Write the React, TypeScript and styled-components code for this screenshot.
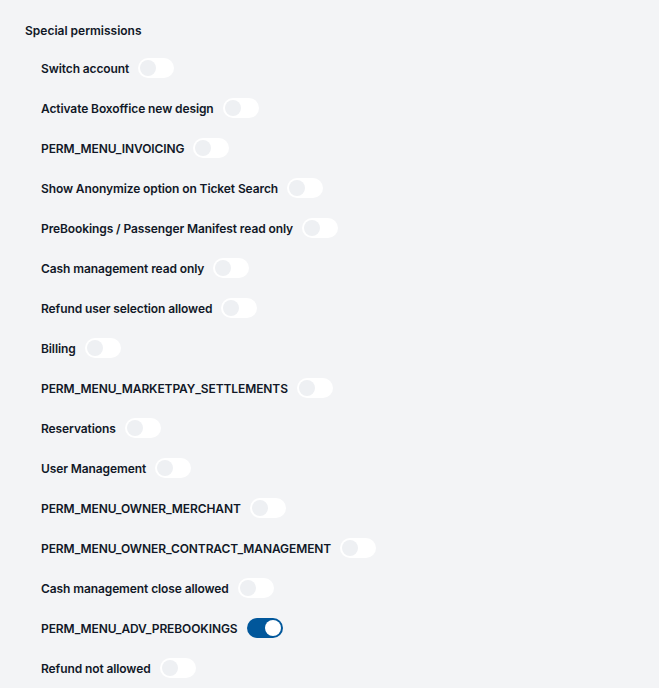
import React, { useState } from 'react';
import styled, { createGlobalStyle } from 'styled-components';

const GlobalStyle = createGlobalStyle`
  html, body {
    margin: 0;
    padding: 0;
    background: #ffffff;
  }
  body {
    font-family: Inter, 'Liberation Sans', Arial, sans-serif;
    -webkit-font-smoothing: antialiased;
  }
`;

const Panel = styled.section`
  width: 659px;
  min-height: 720px;
  box-sizing: border-box;
  background: #f3f4f6;
  padding: 24px 0 0 25px;
`;

const Heading = styled.h3`
  margin: 0 0 20px;
  font-size: 12px;
  line-height: 14px;
  font-weight: 600;
  color: #111827;
`;

const List = styled.div`
  display: flex;
  flex-direction: column;
  gap: 20px;
  padding-left: 16px;
`;

const Row = styled.label`
  display: flex;
  align-items: center;
  gap: 9px;
  height: 20px;
  cursor: pointer;
`;

const Name = styled.span`
  font-size: 12px;
  font-weight: 600;
  letter-spacing: -0.1px;
  color: #111827;
  white-space: nowrap;
`;

const Track = styled.button<{ $on: boolean }>`
  position: relative;
  width: 36px;
  height: 20px;
  padding: 0;
  border: none;
  border-radius: 10px;
  background: ${p => (p.$on ? '#01579b' : '#ffffff')};
  cursor: pointer;
  flex-shrink: 0;
`;

const Knob = styled.span<{ $on: boolean }>`
  position: absolute;
  top: 2px;
  left: ${p => (p.$on ? '18px' : '2px')};
  width: 16px;
  height: 16px;
  border-radius: 50%;
  background: ${p => (p.$on ? '#ffffff' : '#eef0f3')};
  transition: left 0.15s ease;
`;

const PERMISSIONS = [
  'Switch account',
  'Activate Boxoffice new design',
  'PERM_MENU_INVOICING',
  'Show Anonymize option on Ticket Search',
  'PreBookings / Passenger Manifest read only',
  'Cash management read only',
  'Refund user selection allowed',
  'Billing',
  'PERM_MENU_MARKETPAY_SETTLEMENTS',
  'Reservations',
  'User Management',
  'PERM_MENU_OWNER_MERCHANT',
  'PERM_MENU_OWNER_CONTRACT_MANAGEMENT',
  'Cash management close allowed',
  'PERM_MENU_ADV_PREBOOKINGS',
  'Refund not allowed',
];

const App: React.FC = () => {
  const [enabled, setEnabled] = useState<Record<string, boolean>>({
    PERM_MENU_ADV_PREBOOKINGS: true,
  });

  const toggle = (key: string) =>
    setEnabled(prev => ({ ...prev, [key]: !prev[key] }));

  return (
    <>
      <GlobalStyle />
      <Panel>
        <Heading>Special permissions</Heading>
        <List>
          {PERMISSIONS.map(name => {
            const on = !!enabled[name];
            return (
              <Row key={name}>
                <Name>{name}</Name>
                <Track
                  type="button"
                  role="switch"
                  aria-checked={on}
                  $on={on}
                  onClick={() => toggle(name)}
                >
                  <Knob $on={on} />
                </Track>
              </Row>
            );
          })}
        </List>
      </Panel>
    </>
  );
};

export default App;
